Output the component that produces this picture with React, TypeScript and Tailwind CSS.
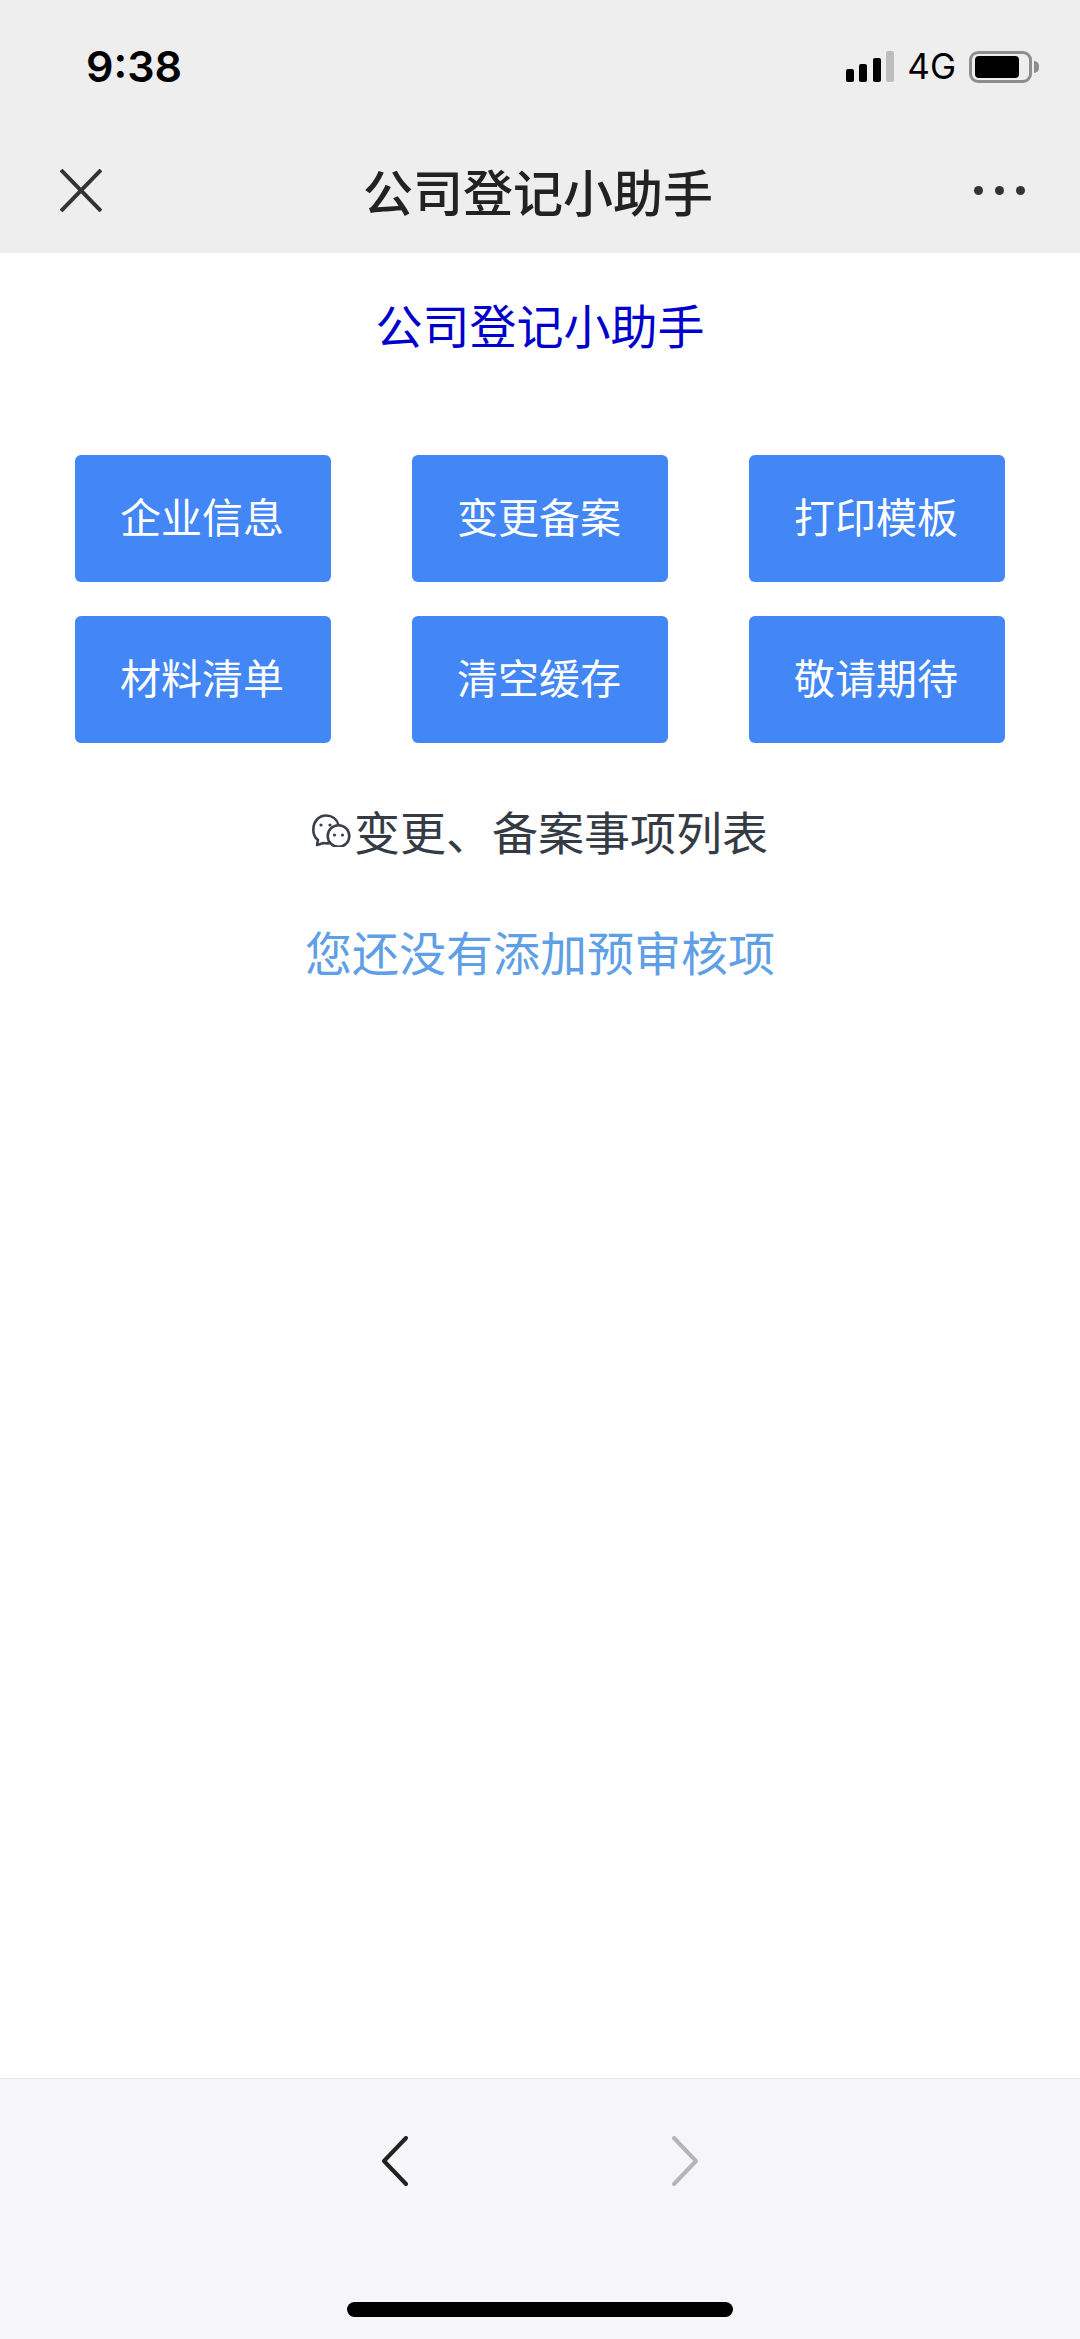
const font = "font-['Noto_Sans_CJK_SC','Noto_Sans',sans-serif]"

const buttons = ['企业信息', '变更备案', '打印模板', '材料清单', '清空缓存', '敬请期待']

function StatusBar() {
    return (
        <div className="flex h-[132px] items-center justify-between pl-[86px] pr-[41px]">
            <span className="font-['Inter',sans-serif] text-[43px] font-semibold leading-none text-black">9:38</span>
            <div className="flex items-center pt-[1px]">
                <div className="flex h-[31px] items-end gap-[5.5px]">
                    <span className="h-[13px] w-[8px] rounded-[2px] bg-black"></span>
                    <span className="h-[18px] w-[8px] rounded-[2px] bg-black"></span>
                    <span className="h-[24px] w-[8px] rounded-[2px] bg-black"></span>
                    <span className="h-[31px] w-[8px] rounded-[2px] bg-[#bdbdbd]"></span>
                </div>
                <span className="ml-[13px] font-['Inter',sans-serif] text-[35px] font-normal leading-none text-black">4G</span>
                <div className="ml-[13px] flex h-[32px] w-[63px] items-center rounded-[9px] border-[3px] border-[#8e8e8e] pl-[3px]">
                    <span className="h-[22px] w-[44px] rounded-[4px] bg-black"></span>
                </div>
                <span className="ml-[2px] h-[12px] w-[5px] rounded-r-full bg-[#8e8e8e]"></span>
            </div>
        </div>
    )
}

function NavBar() {
    return (
        <div className="flex h-[116px] items-center justify-between pl-[60px] pr-[55px]">
            <svg width="42" height="43" viewBox="0 0 42 43" fill="none" stroke="#333" strokeWidth="4">
                <path d="M1 1 L41 42 M41 1 L1 42" />
            </svg>
            <span className={`${font} text-[50px] font-medium leading-none text-[#222]`}>公司登记小助手</span>
            <div className="flex items-center gap-[12px]">
                <span className="h-[9px] w-[9px] rounded-full bg-[#333]"></span>
                <span className="h-[9px] w-[9px] rounded-full bg-[#333]"></span>
                <span className="h-[9px] w-[9px] rounded-full bg-[#333]"></span>
            </div>
        </div>
    )
}

function WechatIcon() {
    return (
        <svg width="39" height="33" viewBox="0 0 39 33" fill="none" stroke="#3a4048" strokeWidth="2.6">
            <path d="M19 29 C17 29.5 14 29.5 11.5 29 L5 31 L6 26 C2.5 23.5 1.3 19.5 1.3 15.5 C1.3 7.5 7 1.5 14 1.5 C20 1.5 25 5 26.5 11" strokeLinejoin="round" />
            <circle cx="26.5" cy="22" r="10.8" fill="#fff" />
            <circle cx="9" cy="11" r="1.6" fill="#3a4048" stroke="none" />
            <circle cx="18" cy="11" r="1.6" fill="#3a4048" stroke="none" />
            <circle cx="22.5" cy="21" r="1.6" fill="#3a4048" stroke="none" />
            <circle cx="30.5" cy="21" r="1.6" fill="#3a4048" stroke="none" />
        </svg>
    )
}

export default function App() {
    return (
        <div className={`${font} flex h-[2339px] w-[1080px] flex-col overflow-hidden bg-white`}>
            <header className="h-[253px] shrink-0 bg-[#eeeeee]">
                <StatusBar />
                <NavBar />
            </header>

            <main className="flex flex-1 flex-col items-center">
                <h1 className="mt-[37px] text-[47px] font-normal leading-[68px] text-[#0000cc]">公司登记小助手</h1>

                <div className="mt-[97px] grid w-[930px] grid-cols-[256px_256px_256px] justify-between gap-y-[34px]">
                    {buttons.map((label) => (
                        <button key={label} className="flex h-[127px] items-center justify-center rounded-[6px] bg-[#4287f5] pb-[5px] pr-[2px] text-[41px] font-normal text-white">
                            {label}
                        </button>
                    ))}
                </div>

                <div className="mt-[55px] flex h-[64px] items-center gap-[3px]">
                    <WechatIcon />
                    <span className="text-[46px] leading-[64px] text-[#353b45]">变更、备案事项列表</span>
                </div>

                <p className="mt-[57px] text-[47px] leading-[64px] text-[#5f9fe6]">您还没有添加预审核项</p>
            </main>

            <footer className="flex h-[261px] shrink-0 flex-col items-center border-t border-[#e6e6e6] bg-[#f6f6f8]">
                <div className="mt-[57px] flex w-[316px] justify-between">
                    <svg width="26" height="50" viewBox="0 0 26 50" fill="none" stroke="#222" strokeWidth="4" strokeLinecap="round" strokeLinejoin="round">
                        <path d="M24 2 L2 25 L24 48" />
                    </svg>
                    <svg width="26" height="50" viewBox="0 0 26 50" fill="none" stroke="#b5b5b5" strokeWidth="4" strokeLinecap="round" strokeLinejoin="round">
                        <path d="M2 2 L24 25 L2 48" />
                    </svg>
                </div>
                <div className="mt-[116px] h-[15px] w-[386px] rounded-full bg-black"></div>
            </footer>
        </div>
    )
}
